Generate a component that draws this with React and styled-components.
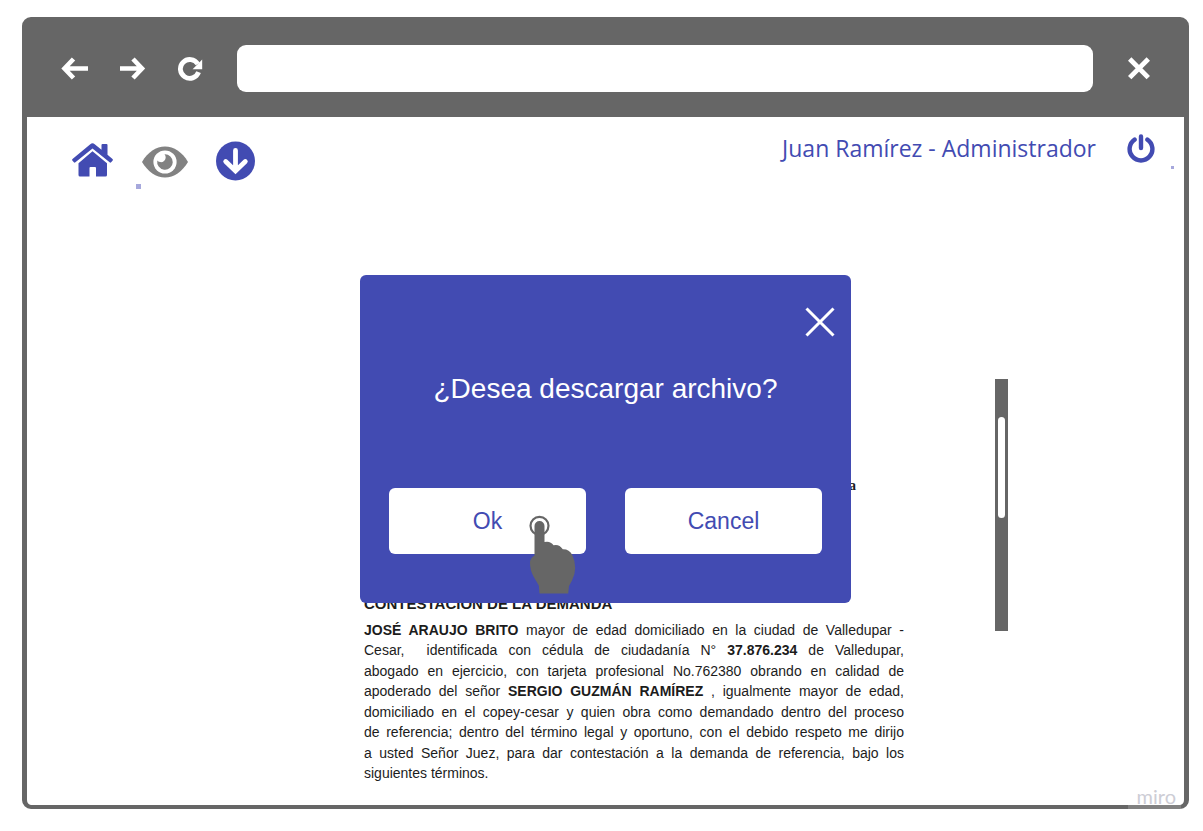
import React from "react";
import styled, { createGlobalStyle } from "styled-components";

const gray = "#666666";
const indigo = "#424bb2";

const GlobalStyle = createGlobalStyle`
  *, *::before, *::after { box-sizing: border-box; }
  body { margin: 0; background: #fff; font-family: "Liberation Sans", Arial, sans-serif; }
  h1, h2, p { margin: 0; }
`;

const Page = styled.div`
  min-height: 100vh;
  display: flex;
  padding: 17px 14px 22px 22px;
`;

const BrowserWindow = styled.div`
  position: relative;
  flex: 1;
  min-width: 0;
  display: flex;
  flex-direction: column;
  border: solid ${gray};
  border-width: 4px 5px;
  border-radius: 9px;
  background: #fff;
`;

const BrowserBar = styled.header`
  display: flex;
  align-items: center;
  gap: 34px;
  padding: 24px 33px 25px 34px;
  background: ${gray};
`;

const BrowserNav = styled.div`
  display: flex;
  gap: 30px;
`;

const IconButton = styled.button`
  display: block;
  padding: 0;
  border: 0;
  background: none;
  color: ${(p) => p.$color || "#fff"};
  cursor: pointer;

  svg { display: block; }
`;

const AddressInput = styled.input`
  flex: 1;
  min-width: 0;
  height: 47px;
  padding: 0 16px;
  border: 0;
  border-radius: 9px;
  background: #fff;
  font-size: 20px;
`;

const Toolbar = styled.nav`
  display: flex;
  justify-content: space-between;
  padding: 15px 29px 0 44px;
  height: 80px;
`;

const ToolGroup = styled.div`
  display: flex;
  align-items: flex-start;
  gap: ${(p) => p.$gap}px;
  padding-top: ${(p) => p.$top || 0}px;
`;

const Tool = styled.div`
  position: relative;
  padding-top: ${(p) => p.$top || 0}px;
`;

const Marker = styled.span`
  position: absolute;
  left: ${(p) => p.$left}px;
  top: ${(p) => p.$top}px;
  width: ${(p) => p.$size}px;
  height: ${(p) => p.$size}px;
  background: #a6a8dc;
`;

const UserName = styled.span`
  color: ${indigo};
  font-family: "Open Sans", sans-serif;
  font-size: 23px;
  line-height: 32px;
  white-space: nowrap;
`;

const Main = styled.main`
  flex: 1;
  display: grid;
  grid-template-columns: minmax(0, 1fr);
`;

const Viewer = styled.div`
  grid-area: 1 / 1;
  display: grid;
  grid-template-columns: 337fr 540px 91px 13px 176fr;
`;

const Document = styled.article`
  grid-column: 2;
  padding-top: 279px;
  color: #1c1c1c;
  font-size: 14px;
  line-height: 20px;
`;

const Reference = styled.p`
  padding-right: 48px;
  text-align: right;
  font-family: "Liberation Serif", serif;
  font-weight: 700;
`;

const DocumentTitle = styled.h2`
  margin: 98px 0 6px;
  font-size: 15px;
  line-height: 20px;
`;

const Paragraph = styled.p`
  display: grid;
  align-content: space-between;
  min-height: 163px;
`;

const Line = styled.span`
  display: block;
  white-space: pre-wrap;
  text-align-last: ${(p) => (p.$last ? "left" : "justify")};
`;

const ScrollTrack = styled.div`
  grid-column: 4;
  align-self: start;
  height: 252px;
  margin-top: 182px;
  padding: 38px 3px 0;
  background: ${gray};
`;

const ScrollThumb = styled.div`
  height: 101px;
  border-radius: 4px;
  background: #fff;
`;

const Dialog = styled.section`
  grid-area: 1 / 1;
  z-index: 1;
  justify-self: center;
  align-self: start;
  width: 491px;
  height: 328px;
  margin-top: 78px;
  padding: 32px 29px 49px;
  display: flex;
  flex-direction: column;
  border-radius: 6px;
  background: ${indigo};
  color: #fff;
`;

const DialogTop = styled.div`
  display: flex;
  justify-content: flex-end;
  margin-right: -13px;
`;

const DialogTitle = styled.h1`
  margin-top: 36px;
  text-align: center;
  font-size: 28px;
  font-weight: 400;
  line-height: 32px;
`;

const Actions = styled.div`
  display: grid;
  grid-template-columns: 1fr 1fr;
  gap: 39px;
  margin-top: auto;
`;

const Action = styled.div`
  position: relative;
`;

const ActionButton = styled.button`
  width: 100%;
  height: 66px;
  border: 0;
  border-radius: 6px;
  background: #fff;
  color: ${indigo};
  font-family: inherit;
  font-size: 23px;
  cursor: pointer;
`;

const Pointer = styled.svg`
  position: absolute;
  left: 139px;
  top: 26px;
  pointer-events: none;
`;

const Watermark = styled.div`
  position: absolute;
  right: 3px;
  bottom: -4px;
  width: 53px;
  height: 24px;
  padding-right: 5px;
  background: rgba(255, 255, 255, 0.18);
  color: #cdcdd5;
  font-family: Lato, sans-serif;
  font-size: 20px;
  line-height: 22px;
  text-align: right;
`;

const BackIcon = () => (
  <svg width="28" height="24" viewBox="0 0 28 24" fill="none" stroke="currentColor" strokeWidth="4.6">
    <path d="M27 11.5H4M12.5 2L3.5 11.5l9 9.5" />
  </svg>
);

const ForwardIcon = () => (
  <svg width="28" height="24" viewBox="0 0 28 24" fill="none" stroke="currentColor" strokeWidth="4.6">
    <path d="M1 11.5h22M14 2l9 9.5-9 9.5" />
  </svg>
);

const ReloadIcon = () => (
  <svg width="26" height="24" viewBox="0 0 26 24" fill="none">
    <path d="M21.6 15.2A9.4 9.4 0 1 1 20.8 7" stroke="currentColor" strokeWidth="4.8" />
    <path d="M25.2 2.4v9.8H15.6z" fill="currentColor" />
  </svg>
);

const WindowCloseIcon = () => (
  <svg width="24" height="24" viewBox="0 0 24 24" fill="none" stroke="currentColor" strokeWidth="4.8">
    <path d="M2.7 2l18.6 18.6M21.3 2L2.7 20.6" />
  </svg>
);

const HomeIcon = () => (
  <svg width="43" height="36" viewBox="0 0 43 36" fill="currentColor">
    <path d="M21.5 10.2L36 22.3V34q0 1.5-1.5 1.5H25V27q0-1-1-1h-4.5q-1 0-1 1v8.5H9Q7.5 35.5 7.5 34V22.3z" />
    <path d="M19.3 3.2q2.2-1.8 4.4 0L30.5 8.800V4q0-1 1-1H35.500q1 0 1 1v9.800l5 4.200q.8.7.2 1.500l-1.600 1.800q-.7.7-1.500 0L21.500 7.500 4.400 21.300q-.8.7-1.500 0L1.300 19.500q-.6-.8.2-1.500z" />
  </svg>
);

const EyeIcon = () => (
  <svg width="46" height="32" viewBox="0 0 46 32">
    <path d="M0 16C6 6 14 .6 23 .6S40 6 46 16C40 26 32 31.4 23 31.4S6 26 0 16z" fill="#828282" />
    <circle cx="23" cy="16" r="11.6" fill="#fff" />
    <path d="M22.500 8.200A7.800 7.800 0 1 1 15.300 14.500 4.200 4.200 0 0 0 22.500 8.200z" fill="#828282" />
  </svg>
);

const DownloadIcon = () => (
  <svg width="40" height="40" viewBox="0 0 40 40" fill="none">
    <circle cx="19.5" cy="20" r="19.5" fill="currentColor" />
    <path d="M19.500 9.500v20M9.700 20.500l9.800 9.500 9.800-9.500" stroke="#fff" strokeWidth="4.800" strokeLinecap="round" />
  </svg>
);

const PowerIcon = () => (
  <svg width="28" height="29" viewBox="0 0 28 29" fill="none" stroke="currentColor" strokeWidth="4.4" strokeLinecap="round">
    <path d="M14 2.500v11.500M7.600 5.600A11.400 11.400 0 1 0 20.400 5.600" />
  </svg>
);

const DialogCloseIcon = () => (
  <svg width="30" height="30" viewBox="0 0 30 30" fill="none" stroke="currentColor" strokeWidth="3">
    <path d="M1.500 1.500l27 27M28.500 1.500l-27 27" />
  </svg>
);

const HandPointer = () => (
  <Pointer width="50" height="82" viewBox="0 0 50 82" aria-hidden="true">
    <circle cx="11.500" cy="11.800" r="9" fill="#fff" stroke={gray} strokeWidth="2.200" />
    <path
      fill={gray}
      d="M6.500 12a5 5 0 0 1 10 0V28q6-1.300 9 3.300 5.500-1.600 9.300 4 6.500-.2 9.500 5.700 2.900 6 2.900 13Q47.200 60 44 66.500L41 72 40.200 79.500H11.500L10.800 71.500 5.500 62.500Q2 56 2 49q0-5 4.500-7.500z"
    />
  </Pointer>
);

export default function App() {
  return (
    <>
      <GlobalStyle />
      <Page>
        <BrowserWindow>
          <BrowserBar>
            <BrowserNav>
              <IconButton aria-label="Atrás"><BackIcon /></IconButton>
              <IconButton aria-label="Adelante"><ForwardIcon /></IconButton>
              <IconButton aria-label="Recargar"><ReloadIcon /></IconButton>
            </BrowserNav>
            <AddressInput type="text" aria-label="Dirección" />
            <IconButton aria-label="Cerrar ventana"><WindowCloseIcon /></IconButton>
          </BrowserBar>

          <Toolbar>
            <ToolGroup $gap={28} $top={9}>
              <IconButton $color={indigo} aria-label="Inicio"><HomeIcon /></IconButton>
              <Tool $top={5}>
                <IconButton aria-label="Ver"><EyeIcon /></IconButton>
                <Marker $left={-6} $top={43} $size={5} />
              </Tool>
              <IconButton $color={indigo} aria-label="Descargar"><DownloadIcon /></IconButton>
            </ToolGroup>
            <ToolGroup $gap={31}>
              <UserName>Juan Ramírez - Administrador</UserName>
              <Tool $top={2}>
                <IconButton $color={indigo} aria-label="Salir"><PowerIcon /></IconButton>
                <Marker $left={44} $top={34} $size={3} />
              </Tool>
            </ToolGroup>
          </Toolbar>

          <Main>
            <Viewer>
              <Document>
                <Reference>a</Reference>
                <DocumentTitle>CONTESTACIÓN DE LA DEMANDA</DocumentTitle>
                <Paragraph>
                  <Line><b>JOSÉ ARAUJO BRITO</b> mayor de edad domiciliado en la ciudad de Valledupar -</Line>
                  <Line>Cesar,&nbsp; identificada con cédula de ciudadanía N° <b>37.876.234</b> de Valledupar,</Line>
                  <Line>abogado en ejercicio, con tarjeta profesional No.762380 obrando en calidad de</Line>
                  <Line>apoderado del señor <b>SERGIO GUZMÁN RAMÍREZ</b> , igualmente mayor de edad,</Line>
                  <Line>domiciliado en el copey-cesar y quien obra como demandado dentro del proceso</Line>
                  <Line>de referencia; dentro del término legal y oportuno, con el debido respeto me dirijo</Line>
                  <Line>a usted Señor Juez, para dar contestación a la demanda de referencia, bajo los</Line>
                  <Line $last>siguientes términos.</Line>
                </Paragraph>
              </Document>
              <ScrollTrack>
                <ScrollThumb />
              </ScrollTrack>
            </Viewer>

            <Dialog role="dialog" aria-labelledby="dialog-title">
              <DialogTop>
                <IconButton aria-label="Cerrar"><DialogCloseIcon /></IconButton>
              </DialogTop>
              <DialogTitle id="dialog-title">¿Desea descargar archivo?</DialogTitle>
              <Actions>
                <Action>
                  <ActionButton>Ok</ActionButton>
                  <HandPointer />
                </Action>
                <Action>
                  <ActionButton>Cancel</ActionButton>
                </Action>
              </Actions>
            </Dialog>
          </Main>
          <Watermark>miro</Watermark>
        </BrowserWindow>
      </Page>
    </>
  );
}
